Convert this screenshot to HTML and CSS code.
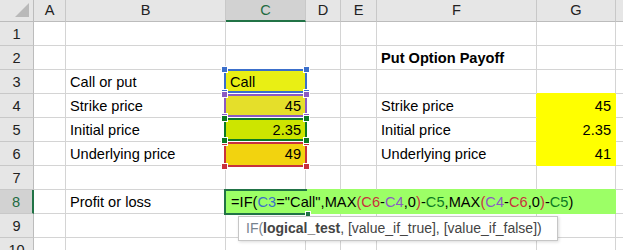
FILE: index.html
```html
<!DOCTYPE html>
<html lang="en">
<head>
  <meta charset="utf-8" />
  <title>Put Option Payoff</title>
  <link rel="stylesheet" href="styles.css">
</head>
<body>
  <div class="sheet">
    <div class="grid">
      <!-- header row -->
      <div class="corner">
        <svg width="34" height="21" viewBox="0 0 34 21"><polygon points="15,17 29,17 29,3" fill="#b9b9b9" /></svg>
      </div>
      <div class="col-head">A</div>
      <div class="col-head">B</div>
      <div class="col-head sel">C</div>
      <div class="col-head">D</div>
      <div class="col-head">E</div>
      <div class="col-head">F</div>
      <div class="col-head">G</div>
      <div class="col-head"></div>

      <!-- 1 -->
      <div class="row-head">1</div>
      <div class="cell"></div><div class="cell"></div><div class="cell"></div><div class="cell"></div>
      <div class="cell"></div><div class="cell"></div><div class="cell"></div><div class="cell"></div>

      <!-- 2 -->
      <div class="row-head">2</div>
      <div class="cell"></div><div class="cell"></div><div class="cell"></div><div class="cell"></div>
      <div class="cell"></div><div class="cell bold">Put Option Payoff</div><div class="cell"></div><div class="cell"></div>

      <!-- 3 -->
      <div class="row-head">3</div>
      <div class="cell"></div>
      <div class="cell">Call or put</div>
      <div class="cell fill-c3 split">Call</div>
      <div class="cell"></div><div class="cell"></div><div class="cell"></div>
      <div class="cell over-yellow"></div>
      <div class="cell"></div>

      <!-- 4 -->
      <div class="row-head">4</div>
      <div class="cell"></div>
      <div class="cell">Strike price</div>
      <div class="cell num fill-c4 split">45</div>
      <div class="cell"></div><div class="cell"></div>
      <div class="cell next-yellow">Strike price</div>
      <div class="cell num yellow">45</div>
      <div class="cell"></div>

      <!-- 5 -->
      <div class="row-head">5</div>
      <div class="cell"></div>
      <div class="cell">Initial price</div>
      <div class="cell num fill-c5 split">2.35</div>
      <div class="cell"></div><div class="cell"></div>
      <div class="cell next-yellow">Initial price</div>
      <div class="cell num yellow">2.35</div>
      <div class="cell"></div>

      <!-- 6 -->
      <div class="row-head">6</div>
      <div class="cell"></div>
      <div class="cell">Underlying price</div>
      <div class="cell num fill-c6">49</div>
      <div class="cell"></div><div class="cell"></div>
      <div class="cell next-yellow">Underlying price</div>
      <div class="cell num yellow">41</div>
      <div class="cell"></div>

      <!-- 7 -->
      <div class="row-head">7</div>
      <div class="cell"></div><div class="cell"></div>
      <div class="cell over-green"></div><div class="cell over-green"></div><div class="cell over-green"></div>
      <div class="cell over-green"></div><div class="cell over-green"></div>
      <div class="cell"></div>

      <!-- 8 -->
      <div class="row-head sel">8</div>
      <div class="cell"></div>
      <div class="cell">Profit or loss</div>
      <div class="cell green editing">=IF(<span class="r-blue">C3</span>="Call",MAX<span class="r-red">(C6</span>-<span class="r-purple">C4</span>,0<span class="r-red">)</span>-<span class="r-green">C5</span>,MAX<span class="r-red">(</span><span class="r-purple">C4</span>-<span class="r-red">C6</span>,0<span class="r-red">)</span>-<span class="r-green">C5</span>)</div>
      <div class="cell green"></div><div class="cell green"></div><div class="cell green"></div><div class="cell green"></div>
      <div class="cell"></div>

      <!-- 9 -->
      <div class="row-head">9</div>
      <div class="cell"></div><div class="cell"></div><div class="cell"></div><div class="cell"></div>
      <div class="cell"></div><div class="cell"></div><div class="cell"></div><div class="cell"></div>

      <!-- 10 -->
      <div class="row-head">10</div>
      <div class="cell"></div><div class="cell"></div><div class="cell"></div><div class="cell"></div>
      <div class="cell"></div><div class="cell"></div><div class="cell"></div><div class="cell"></div>
    </div>

    <!-- range highlights of the formula references, drawn in Excel's order -->
    <div class="range range-c3 blue"><i class="tl"></i><i class="tr"></i><i class="bl"></i><i class="br"></i></div>
    <div class="range range-c6 red"><i class="tl"></i><i class="tr"></i><i class="bl"></i><i class="br"></i></div>
    <div class="range range-c4 purple"><i class="tl"></i><i class="tr"></i><i class="bl"></i><i class="br"></i></div>
    <div class="range range-c5 green-ref"><i class="tl"></i><i class="tr"></i><i class="bl"></i><i class="br"></i></div>

    <div class="active"><i class="fill-handle"></i></div>

    <div class="tip"><span class="tip-fn">IF(</span><b>logical_test</b>, [value_if_true], [value_if_false])</div>
  </div>
</body>
</html>
```

FILE: styles.css
```css
* {
  box-sizing: border-box;
  margin: 0;
  padding: 0;
}

body {
  width: 623px;
  height: 250px;
  overflow: hidden;
  background: #fff;
  font-family: "Liberation Sans", Arial, sans-serif;
  font-size: 14.6px;
  color: #000;
}

.sheet {
  position: relative;
}

.grid {
  display: grid;
  grid-template-columns: 34px 32px 160px 80px 35px 36px 160px 79px 40px;
  grid-template-rows: 22px repeat(10, 24px);
}

/* headers */
.corner {
  background: #e6e6e6;
  border-right: 1px solid #bcbcbc;
  border-bottom: 1px solid #bcbcbc;
}

.corner svg {
  display: block;
}

.col-head {
  background: #e6e6e6;
  border-right: 1px solid #c8c8c8;
  border-bottom: 1px solid #bcbcbc;
  text-align: center;
  line-height: 21px;
  color: #222;
}

.col-head.sel {
  background: #d2d2d2;
  border-bottom: 2px solid #217346;
  color: #1e6b41;
}

.row-head {
  background: #e6e6e6;
  border-right: 1px solid #bcbcbc;
  border-bottom: 1px solid #c8c8c8;
  text-align: center;
  line-height: 24px;
  color: #222;
}

.row-head.sel {
  background: #d2d2d2;
  border-right: 2px solid #217346;
  color: #1e6b41;
}

/* cells */
.cell {
  border-right: 1px solid #d4d4d4;
  border-bottom: 1px solid #d4d4d4;
  line-height: 24px;
  padding: 0 4px;
  white-space: nowrap;
}

.num {
  text-align: right;
  padding-right: 4px;
}

.bold {
  font-weight: bold;
}

.fill-c3 { background: #e9ef14; }
.fill-c4 { background: #e5df2a; }
.fill-c5 { background: #cde500; }
.fill-c6 { background: #f2d30f; }

.split {
  border-bottom-color: #fff;
}

.yellow {
  background: #ffff00;
  border-color: #ffff00;
}

.over-yellow {
  border-bottom-color: #ffff00;
}

.next-yellow {
  border-right-color: #ffff00;
}

.green {
  background: #9cff66;
  border-color: #9cff66;
}

.over-green {
  border-bottom-color: #9cff66;
}

.editing {
  position: relative;
  z-index: 1;
  overflow: visible;
  padding-left: 5px;
  letter-spacing: 0.04px;
}

.r-blue { color: #3b6fcb; }
.r-red { color: #c8323c; }
.r-purple { color: #8a5ac4; }
.r-green { color: #0c7a22; }

/* reference boxes */
.range {
  position: absolute;
  left: 224px;
  width: 83px;
  border: 2px solid;
}

.range i {
  position: absolute;
  width: 7px;
  height: 7px;
  border: 1px solid #fff;
}

.range .tl { left: -5px; top: -5px; }
.range .tr { right: -5px; top: -5px; }
.range .bl { left: -5px; bottom: -5px; }
.range .br { right: -5px; bottom: -5px; }

.range-c3 { top: 69px; height: 24px; }
.range-c4 { top: 94px; height: 23px; }
.range-c5 { top: 118px; height: 23px; }
.range-c6 { top: 142px; height: 25px; }

.blue { border-color: #3b6fcb; }
.blue i { background: #3b6fcb; }
.purple { border-color: #8a5ac4; }
.purple i { background: #8a5ac4; }
.green-ref { border-color: #0c7a22; }
.green-ref i { background: #0c7a22; }
.red { border-color: #c8323c; }
.red i { background: #c8323c; }

/* active cell */
.active {
  position: absolute;
  left: 224px;
  top: 189px;
  width: 83px;
  height: 26px;
  border: 2px solid #217346;
  border-right: none;
  z-index: 2;
}

.fill-handle {
  position: absolute;
  right: -4px;
  bottom: -4px;
  width: 6px;
  height: 6px;
  background: #217346;
  border: 1px solid #fff;
}

/* function tooltip */
.tip {
  position: absolute;
  left: 238px;
  top: 216px;
  width: 320px;
  height: 25px;
  background: #fff;
  border: 1px solid #c6c6c6;
  box-shadow: 1px 1px 3px rgba(0, 0, 0, 0.15);
  padding-left: 7px;
  font-size: 14px;
  line-height: 23px;
  color: #444;
  white-space: nowrap;
  z-index: 3;
}

.tip-fn {
  color: #76828e;
}
```
